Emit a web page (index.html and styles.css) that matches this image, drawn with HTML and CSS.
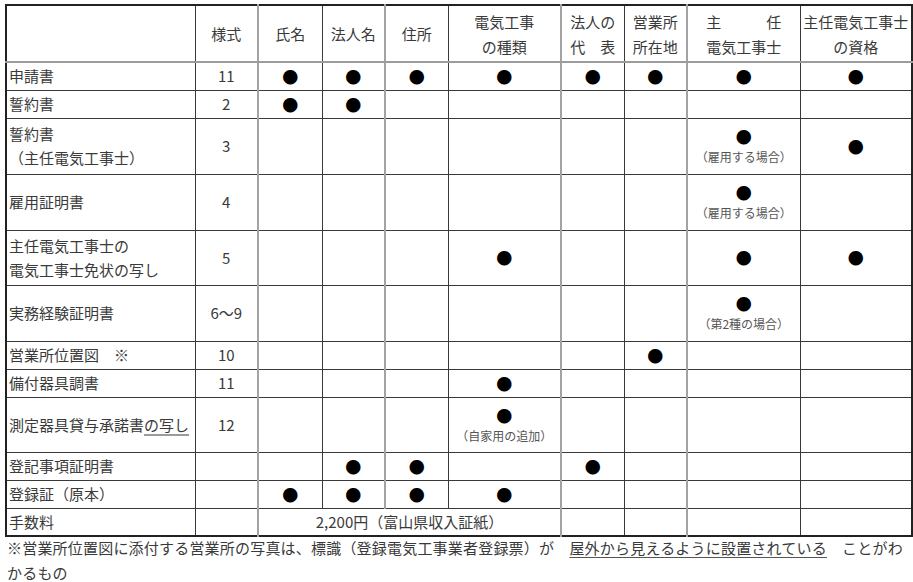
FILE: index.html
```html
<!DOCTYPE html>
<html lang="ja">
<head>
<meta charset="utf-8">
<title>電気工事業 登録申請 添付書類一覧</title>
<link rel="stylesheet" href="styles.css">
</head>
<body>
<main class="page">
<table class="reqs">
<colgroup>
<col class="w-doc"><col class="w-form"><col class="w-s2"><col class="w-s"><col class="w-s"><col class="w-l"><col class="w-s"><col class="w-s"><col class="w-l"><col class="w-last">
</colgroup>
<thead>
<tr class="r-head">
<th></th>
<th>様式</th>
<th class="gl">氏名</th>
<th>法人名</th>
<th class="gl">住所</th>
<th>電気工事<br>の種類</th>
<th class="gl">法人の<br>代　表</th>
<th>営業所<br>所在地</th>
<th class="gl">主　　　任<br>電気工事士</th>
<th>主任電気工事士<br>の資格</th>
</tr>
</thead>
<tbody>
<tr class="r1">
<td class="doc">申請書</td><td>11</td>
<td class="gl"><span class="dot">●</span></td><td><span class="dot">●</span></td>
<td class="gl"><span class="dot">●</span></td><td><span class="dot">●</span></td>
<td class="gl"><span class="dot">●</span></td><td><span class="dot">●</span></td>
<td class="gl"><span class="dot">●</span></td><td><span class="dot">●</span></td>
</tr>
<tr class="r1">
<td class="doc">誓約書</td><td>2</td>
<td class="gl"><span class="dot">●</span></td><td><span class="dot">●</span></td>
<td class="gl"></td><td></td>
<td class="gl"></td><td></td>
<td class="gl"></td><td></td>
</tr>
<tr class="r2a">
<td class="doc">誓約書<br>（主任電気工事士）</td><td>3</td>
<td class="gl"></td><td></td>
<td class="gl"></td><td></td>
<td class="gl"></td><td></td>
<td class="gl"><span class="dot dot-b">●</span><span class="sub">（雇用する場合）</span></td><td><span class="dot">●</span></td>
</tr>
<tr class="r2a">
<td class="doc">雇用証明書</td><td>4</td>
<td class="gl"></td><td></td>
<td class="gl"></td><td></td>
<td class="gl"></td><td></td>
<td class="gl"><span class="dot dot-b">●</span><span class="sub">（雇用する場合）</span></td><td></td>
</tr>
<tr class="r2b">
<td class="doc">主任電気工事士の<br>電気工事士免状の写し</td><td>5</td>
<td class="gl"></td><td></td>
<td class="gl"></td><td><span class="dot">●</span></td>
<td class="gl"></td><td></td>
<td class="gl"><span class="dot">●</span></td><td><span class="dot">●</span></td>
</tr>
<tr class="r2a">
<td class="doc">実務経験証明書</td><td>6～9</td>
<td class="gl"></td><td></td>
<td class="gl"></td><td></td>
<td class="gl"></td><td></td>
<td class="gl"><span class="dot dot-b">●</span><span class="sub">（第2種の場合）</span></td><td></td>
</tr>
<tr class="r1">
<td class="doc">営業所位置図　※</td><td>10</td>
<td class="gl"></td><td></td>
<td class="gl"></td><td></td>
<td class="gl"></td><td><span class="dot">●</span></td>
<td class="gl"></td><td></td>
</tr>
<tr class="r1">
<td class="doc">備付器具調書</td><td>11</td>
<td class="gl"></td><td></td>
<td class="gl"></td><td><span class="dot">●</span></td>
<td class="gl"></td><td></td>
<td class="gl"></td><td></td>
</tr>
<tr class="r2b">
<td class="doc">測定器具貸与承諾書<span class="ul-cell">の写し</span></td><td>12</td>
<td class="gl"></td><td></td>
<td class="gl"></td><td><span class="dot dot-b">●</span><span class="sub">（自家用の追加）</span></td>
<td class="gl"></td><td></td>
<td class="gl"></td><td></td>
</tr>
<tr class="r1">
<td class="doc">登記事項証明書</td><td></td>
<td class="gl"></td><td><span class="dot">●</span></td>
<td class="gl"><span class="dot">●</span></td><td></td>
<td class="gl"><span class="dot">●</span></td><td></td>
<td class="gl"></td><td></td>
</tr>
<tr class="r1">
<td class="doc">登録証（原本）</td><td></td>
<td class="gl"><span class="dot">●</span></td><td><span class="dot">●</span></td>
<td class="gl"><span class="dot">●</span></td><td><span class="dot">●</span></td>
<td class="gl"></td><td></td>
<td class="gl"></td><td></td>
</tr>
<tr class="r1">
<td class="doc">手数料</td><td></td>
<td class="gl fee" colspan="4">2,200円（富山県収入証紙）</td>
<td class="gl"></td><td></td>
<td class="gl"></td><td></td>
</tr>
</tbody>
</table>
<p class="foot">※営業所位置図に添付する営業所の写真は、標識（登録電気工事業者登録票）が　<span class="ul">屋外から見えるように設置されている</span>　ことがわかるもの</p>
</main>
</body>
</html>
```

FILE: styles.css
```css
* { box-sizing: border-box; }
html, body { margin: 0; padding: 0; background: #ffffff; }
body {
  font-family: "Noto Sans CJK JP", "Noto Sans", sans-serif;
  font-size: 15px;
  color: #3a3a3a;
}
.page {
  width: 913px;
  padding: 4px 0 0 5px;
}
.reqs {
  border-collapse: collapse;
  table-layout: fixed;
  width: 906px;
  border: 2px solid #222222;
}
.w-doc { width: 189px; }
.w-form { width: 63px; }
.w-s2 { width: 64px; }
.w-s { width: 63px; }
.w-l { width: 113px; }
.w-last { width: 112px; }

.reqs th,
.reqs td {
  border: 1px solid #3a3a3a;
  padding: 0 2px;
  font-weight: 400;
  line-height: 24px;
  text-align: center;
  vertical-align: middle;
  white-space: nowrap;
}
.reqs thead th {
  border-bottom: 2px solid #9c9c9c;
  line-height: 25px;
}
.reqs .gl { border-left: 2px solid #a3a3a3; }
.reqs .doc { text-align: left; }

.r-head { height: 57px; }
.r1 { height: 28px; }
.r2a { height: 56px; }
.r2b { height: 55px; }

.dot {
  color: #000000;
  font-size: 16px;
}
.dot-b {
  display: block;
  line-height: 22px;
}
.sub {
  display: block;
  font-size: 12px;
  line-height: 20px;
  color: #555555;
}
.ul-cell {
  text-decoration: underline;
  text-decoration-color: #9a9a9a;
  text-decoration-thickness: 2px;
  text-underline-offset: 3px;
}
.fee { text-align: center; }

.foot {
  margin: -2px 0 0 0;
  padding-left: 2px;
  width: 908px;
  line-height: 25px;
  letter-spacing: 0.2px;
}
.ul {
  text-decoration: underline;
  text-decoration-color: #555555;
  text-underline-offset: 3px;
}
```
